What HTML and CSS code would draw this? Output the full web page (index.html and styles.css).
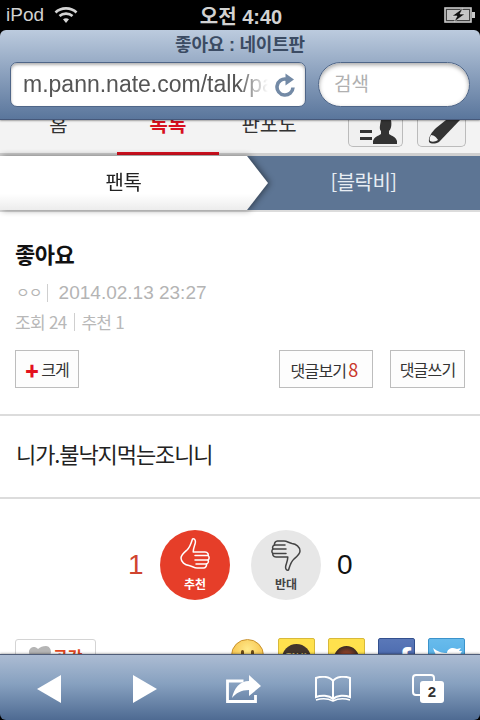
FILE: index.html
```html
<!DOCTYPE html>
<html lang="ko">
<head>
<meta charset="utf-8">
<title>좋아요 : 네이트판</title>
<link rel="stylesheet" href="styles.css">
</head>
<body>
<div class="phone">
  <header class="status">
    <div class="status-left">
      <span class="carrier">iPod</span>
      <svg class="wifi" width="24" height="18" viewBox="0 0 24 18"><path d="M1.500 6.500C7 1 17 1 22.500 6.500" fill="none" stroke="#d4d4d4" stroke-width="2.600"/><path d="M5.500 10C9 6.800 15 6.800 18.500 10" fill="none" stroke="#d4d4d4" stroke-width="2.600"/><path d="M9 13.200c1.800-1.400 4.200-1.400 6 0L12 17z" fill="#d4d4d4"/></svg>
    </div>
    <span class="clock">오전 4:40</span>
    <svg class="battery" width="32" height="16" viewBox="0 0 32 16"><rect x="1" y="1" width="26" height="14" fill="#444" stroke="#c8c8c8" stroke-width="1.600"/><rect x="3" y="3" width="22" height="10" fill="#c4c4c4"/><rect x="28" y="5" width="3" height="6" fill="#c8c8c8"/><path d="M19 1 8 9h5l-3 6 11-8h-5z" fill="#111" stroke="#e4e4e4" stroke-width=".6"/></svg>
  </header>

  <section class="browser-top">
    <h1 class="browser-title">좋아요 : 네이트판</h1>
    <div class="fields">
      <div class="url-field">
        <span class="url-text">m.pann.nate.com/talk/pann</span>
        <svg class="reload" width="22" height="24" viewBox="0 0 22 24"><path d="M18 14.500A8 8 0 1 1 11.500 6.200" fill="none" stroke="#738aa6" stroke-width="3.600"/><path d="M10.500 0.500 19 6.500l-8.500 6z" fill="#738aa6"/></svg>
      </div>
      <div class="search-field">검색</div>
    </div>
  </section>

  <main class="page">
    <nav class="nav">
      <span class="nav-item nav-home">홈</span>
      <span class="nav-item nav-talk">톡톡</span>
      <span class="nav-item nav-pando">판포도</span>
      <div class="nav-icons">
        <span class="nav-btn">
          <svg width="44" height="28" viewBox="0 0 44 28"><path d="M6 10h12v3H6zM6 17h12v3H6z" fill="#333"/><path d="M27 0h10c1 5 0 9-2 11v3c3 2 7 3 8 7v3H19v-3c1-4 5-5 8-7v-3c-2-2-1-6 0-11z" fill="#333"/></svg>
        </span>
        <span class="nav-btn nav-btn-pen">
          <svg width="44" height="28" viewBox="0 0 44 28"><path d="M16 8 26 0h14L19 22c-4 2-8 2-10 0-1-5 3-10 7-14z" fill="#333"/><path d="M11 15c3 0 6 3 7 5-3 2-6 2-8 1-1-2 0-4 1-6z" fill="#f2f2f2"/></svg>
        </span>
      </div>
    </nav>

    <div class="subtabs">
      <div class="tab-shadow"><div class="tab-on">팬톡</div></div>
      <div class="tab-off">[블락비]</div>
    </div>

    <article class="article">
      <h2 class="post-title">좋아요</h2>
      <p class="post-meta"><span class="post-author">ㅇㅇ</span><span class="bar"></span><span>2014.02.13 23:27</span></p>
      <p class="post-stats"><span>조회 24</span><span class="bar bar-stats"></span><span>추천 1</span></p>
      <div class="actions">
        <span class="btn btn-big"><span class="plus">✚</span>크게</span>
        <div class="actions-right">
          <span class="btn btn-view">댓글보기<em class="count">8</em></span>
          <span class="btn btn-write">댓글쓰기</span>
        </div>
      </div>
    </article>

    <p class="body-text">니가.불낙지먹는조니니</p>

    <section class="votes">
      <span class="vote-count vote-up-count">1</span>
      <span class="vote vote-up">
        <svg width="30" height="33" viewBox="0 0 30 33"><path d="M12.500 1c2.500-1 3.500 2 2.500 5-1 3-1.800 5-1.800 8H25c3 0 3.500 2.500 3 3.500 1.500 1 1.500 3.500 0 4.500 .8 1.500 .3 3.500-1.500 4 .3 2-1 4-3 4H17c-3 0-5-2-8-2.500C5 27 1 24 1 20c0-3 2.500-5 6-8 3-2.500 4-6 5.500-11z" fill="none" stroke="currentColor" stroke-width="1.500" stroke-linejoin="round"/><path d="M15 17.500h13M15 22h13M16 26h10.500" fill="none" stroke="currentColor" stroke-width="1.500" stroke-linecap="round"/></svg>
        <span class="vote-label">추천</span>
      </span>
      <span class="vote vote-down">
        <svg width="30" height="33" viewBox="0 0 30 33"><g transform="rotate(180 15 16.500)"><path d="M12.500 1c2.500-1 3.500 2 2.500 5-1 3-1.800 5-1.800 8H25c3 0 3.500 2.500 3 3.500 1.500 1 1.500 3.500 0 4.500 .8 1.500 .3 3.500-1.500 4 .3 2-1 4-3 4H17c-3 0-5-2-8-2.500C5 27 1 24 1 20c0-3 2.500-5 6-8 3-2.500 4-6 5.500-11z" fill="none" stroke="currentColor" stroke-width="1.500" stroke-linejoin="round"/><path d="M15 17.500h13M15 22h13M16 26h10.500" fill="none" stroke="currentColor" stroke-width="1.500" stroke-linecap="round"/></g></svg>
        <span class="vote-label">반대</span>
      </span>
      <span class="vote-count vote-down-count">0</span>
    </section>

    <section class="share">
      <span class="like-btn">
        <svg width="22" height="16" viewBox="0 0 22 16"><path d="M9 16C4 12 0 10 0 6c0-4 5-7 9-3 2-2 5-3 8-3 3 0 5 3 5 6 0 4-6 7-13 10z" fill="#b5b5b5"/></svg>
        <span class="like-text">공감</span>
      </span>
      <div class="share-icons">
        <span class="smiley"><i class="eye"></i><i class="eye"></i></span>
        <span class="sq sq-kakao"><span class="talk">TALK</span></span>
        <span class="sq sq-story"><span class="story-dot"></span></span>
        <span class="sq sq-fb"><span class="fb-f">f</span></span>
        <span class="sq sq-tw">
          <svg width="30" height="14" viewBox="0 0 30 14"><path d="M1 0c5 4 9 5 14 5 0-3 3-5 6-5 2 0 3 1 4 1l4-1-2 3 3 0c-3 5-6 14-15 14C8 17 4 8 1 0z" fill="#fff"/></svg>
        </span>
      </div>
    </section>
  </main>

  <footer class="browser-bottom">
    <svg class="tool" width="24" height="30" viewBox="0 0 24 30"><path d="M24 1v28L0 15z" fill="#fff"/></svg>
    <svg class="tool tool-forward" width="24" height="30" viewBox="0 0 24 30"><path d="M0 1v28l24-14z" fill="#fff"/></svg>
    <svg class="tool tool-share" width="36" height="28" viewBox="0 0 36 28"><path d="M1.500 6h16M1.500 4.500V26.500h28V20" fill="none" stroke="#fff" stroke-width="2.800"/><path d="M23 0l12 11-12 10v-6C15 15 10 18 6 23 8 13 14 6 23 6z" fill="#fff"/></svg>
    <svg class="tool tool-book" width="36" height="26" viewBox="0 0 36 26"><path d="M18 5C14 0 6 0 1 2v19c5-2 13-2 17 2 4-4 12-4 17-2V2C30 0 22 0 18 5zM18 5v18" fill="none" stroke="#fff" stroke-width="2"/><path d="M1 24c5-1.500 12-1.500 17 1 5-2.500 12-2.500 17-1" fill="none" stroke="#fff" stroke-width="1.500"/></svg>
    <span class="tabs-icon"><span class="tabs-back"></span><span class="tabs-num">2</span></span>
  </footer>
</div>
</body>
</html>
```

FILE: styles.css
```css
* { box-sizing: border-box; }
html, body { margin: 0; padding: 0; }
body { background: #000; font-family: "Liberation Sans", "Noto Sans CJK KR", sans-serif; }
h1, h2, p { margin: 0; }
em { font-style: normal; }

.phone { width: 480px; height: 720px; display: flex; flex-direction: column; overflow: hidden; background: #000; }

/* status bar */
.status { height: 30px; flex: none; display: grid; grid-template-columns: 1fr auto 1fr; align-items: center; padding: 0 4px 0 6px; color: #d2d2d2; }
.status-left { display: flex; align-items: center; gap: 10px; }
.carrier { font-size: 19px; }
.clock { font-size: 20px; font-weight: 700; }
.battery { justify-self: end; }

/* browser chrome top */
.browser-top { height: 90px; flex: none; display: flex; flex-direction: column; border-radius: 6px 6px 0 0; background: linear-gradient(#bccbde, #8fa4c0 45%, #5a769c); border-bottom: 1px solid #46587a; position: relative; z-index: 2; box-shadow: 0 1px 2px rgba(0,0,0,.35); }
.browser-title { height: 32px; font-size: 18px; font-weight: 700; line-height: 30px; text-align: center; color: #3b4b63; letter-spacing: -0.2px; }
.fields { display: flex; gap: 12px; padding: 0 10px; }
.url-field { width: 296px; height: 45px; background: #fff; border: 1px solid #4f6688; border-radius: 7px; display: flex; align-items: center; justify-content: space-between; padding: 0 8px 0 12px; box-shadow: inset 0 2px 3px rgba(0,0,0,.3); }
.url-text { width: 245px; overflow: hidden; white-space: nowrap; font-size: 23px; color: #555; -webkit-mask-image: linear-gradient(90deg, #000 88%, transparent); mask-image: linear-gradient(90deg, #000 88%, transparent); }
.search-field { width: 152px; height: 45px; background: #fff; border: 1px solid #4f6688; border-radius: 23px; padding-left: 15px; font-size: 19px; line-height: 43px; color: #b0b0b0; box-shadow: inset 0 2px 4px rgba(0,0,0,.35); }

/* page */
.page { flex: 1; min-height: 0; overflow: hidden; background: #fff; }
.nav { height: 36px; background: #f3f3f3; border-bottom: 3px solid #cfcfcf; display: flex; font-family: "Noto Sans CJK KR", sans-serif; }
.nav-item { height: 35px; font-size: 20px; line-height: 8px; text-align: center; color: #333; width: 100px; flex: none; }
.nav-home { width: 117px; padding-right: 0; }
.nav-talk { width: 102px; color: #d7111f; font-weight: 700; box-shadow: inset 0 -3px 0 #d7111f; }
.nav-icons { margin-left: auto; display: flex; gap: 14px; padding-right: 14px; }
.nav-btn { width: 55px; height: 27px; border: 1px solid #bbb; border-top: 0; border-radius: 0 0 5px 5px; background: #f0f0f0; display: flex; justify-content: center; overflow: hidden; }
.nav-btn-pen { width: 49px; }

.subtabs { height: 56px; display: flex; background: #5d7594; border-bottom: 2px solid #dcdcdc; font-family: "Noto Sans CJK KR", sans-serif; font-size: 20px; }
.tab-shadow { width: 269px; flex: none; filter: drop-shadow(2px 0 3px rgba(0,0,0,.45)); }
.tab-on { height: 100%; padding-right: 22px; clip-path: polygon(0 0, 247px 0, 268px 50%, 247px 100%, 0 100%); background: linear-gradient(#fff 70%, #ececec); text-align: center; line-height: 52px; color: #222; letter-spacing: -0.5px; }
.tab-off { flex: 1; text-align: center; line-height: 52px; color: #e8edf3; padding-right: 22px; letter-spacing: -0.5px; }

.article { padding: 26px 15px 26px 15px; border-bottom: 2px solid #dcdcdc; font-family: "Noto Sans CJK KR", sans-serif; }
.post-title { font-size: 22px; font-weight: 700; line-height: 30px; color: #111; letter-spacing: -0.5px; }
.post-meta { margin-top: 10px; padding-left: 1px; display: flex; align-items: center; font-size: 19px; line-height: 30px; color: #b4b4b4; font-family: "Liberation Sans", "Noto Sans CJK KR", sans-serif; }
.post-author { font-size: 15px; letter-spacing: -1px; }
.bar { width: 1px; height: 18px; background: #cfcfcf; margin: 0 11px 0 5px; flex: none; }
.post-stats { display: flex; align-items: center; font-size: 17px; line-height: 28px; color: #b8b8b8; letter-spacing: -0.7px; }
.bar-stats { margin: 0 6px 0 8px; }
.actions { margin-top: 14px; display: flex; justify-content: space-between; }
.actions-right { display: flex; gap: 17px; }
.btn { height: 38px; border: 1px solid #bdbdbd; background: #fdfdfd; font-size: 16px; line-height: 36px; text-align: center; color: #333; letter-spacing: -0.8px; white-space: nowrap; }
.btn-big { width: 64px; }
.plus { color: #e3121e; font-size: 14px; margin-right: 3px; }
.btn-view { width: 94px; padding-right: 4px; }
.btn-write { width: 75px; }
.count { color: #c9372a; font-size: 18px; margin-left: 2px; }

.body-text { height: 83px; padding-left: 16px; border-bottom: 2px solid #dcdcdc; font-family: "Noto Sans CJK KR", sans-serif; font-size: 22px; line-height: 75px; color: #222; letter-spacing: -1.1px; }

.votes { height: 132px; display: flex; align-items: center; font-family: "Noto Sans CJK KR", sans-serif; padding-left: 128px; }
.vote-count { font-size: 28px; font-family: "Liberation Sans", sans-serif; width: 32px; }
.vote-up-count { color: #d0442f; }
.vote-down-count { color: #111; margin-left: 16px; }
.vote { width: 70px; height: 70px; border-radius: 50%; display: flex; flex-direction: column; align-items: center; padding-top: 8px; flex: none; }
.vote-up { background: #e63e29; color: #fff; }
.vote-down { background: #e7e7e7; color: #444; margin-left: 21px; }
.vote-label { font-size: 12px; font-weight: 700; line-height: 17px; margin-top: 4px; }

.share { display: flex; justify-content: space-between; padding: 0 15px; margin-top: 7px; }
.like-btn { width: 81px; height: 36px; margin-top: 1px; border: 1px solid #d4d4d4; border-radius: 3px; display: flex; align-items: flex-start; gap: 2px; padding: 6px 0 0 13px; font-family: "Noto Sans CJK KR", sans-serif; font-size: 16px; font-weight: 700; color: #e0481f; background: #fff; line-height: 20px; }
.share-icons { display: flex; gap: 13px; }
.smiley { width: 33px; height: 33px; margin: 1px 1px 0 0; border-radius: 50%; background: radial-gradient(circle at 50% 30%, #ffe98a, #f2ae2a); border: 1px solid #c9912a; display: flex; justify-content: center; gap: 7px; padding-top: 10px; }
.eye { width: 3px; height: 11px; background: #6b4a16; border-radius: 2px; }
.sq { width: 37px; height: 37px; border-radius: 2px; display: flex; justify-content: center; overflow: hidden; flex: none; }
.sq-kakao, .sq-story { background: #ffe14d; border: 1px solid #d8b93a; padding-top: 4px; }
.talk { width: 29px; height: 29px; border-radius: 50%; background: #42352c; color: #d9c070; font-size: 8px; font-weight: 700; text-align: center; line-height: 23px; margin-top: 1px; }
.story-dot { width: 25px; height: 25px; border-radius: 50%; background: radial-gradient(circle, #8a4028 35%, #3a2a22 70%); margin-top: 3px; }
.sq-fb { background: linear-gradient(#5a78b8, #3e5ea6); border: 1px solid #33508e; justify-content: flex-end; }
.fb-f { color: #fff; font-size: 36px; font-weight: 700; line-height: 46px; padding-right: 3px; }
.sq-tw { background: linear-gradient(#68bbec, #49a8e2); border: 1px solid #3b93cb; padding-top: 9px; }

/* browser chrome bottom */
.browser-bottom { height: 66px; flex: none; display: flex; align-items: center; padding: 3px 0 0 37px; border-top: 1px solid #4f5d78; border-radius: 0 0 6px 6px; background: linear-gradient(#acbcd3, #86a0bf 45%, #4e6a92); position: relative; z-index: 2; box-shadow: 0 -1px 2px rgba(0,0,0,.25); }
.tool { flex: none; }
.tool-forward { margin-left: 72px; }
.tool-share { margin-left: 69px; }
.tool-book { margin-left: 53px; }
.tabs-icon { width: 32px; height: 30px; position: relative; margin-left: 61px; flex: none; }
.tabs-back { position: absolute; left: 0; top: 0; width: 23px; height: 22px; border: 2px solid #fff; border-radius: 4px; }
.tabs-num { position: absolute; left: 8px; top: 7px; width: 24px; height: 22px; background: #fff; border-radius: 3px; color: #333; font-size: 15px; font-weight: 700; line-height: 22px; text-align: center; }
```
